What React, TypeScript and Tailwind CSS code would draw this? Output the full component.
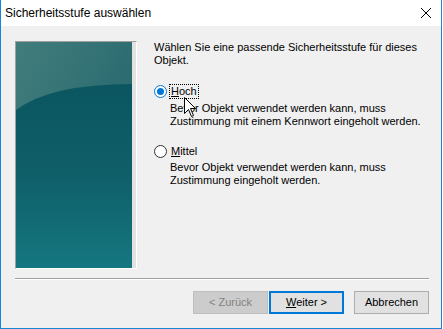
import React from "react";

const font = { fontFamily: '"Liberation Sans", Arial, sans-serif' };

const Radio = ({ checked }: { checked: boolean }) => (
  <span
    className={
      "flex h-[13px] w-[13px] shrink-0 items-center justify-center rounded-full border bg-white " +
      (checked ? "border-[#0078d7]" : "border-[#333333]")
    }
  >
    {checked && <span className="h-[7px] w-[7px] rounded-full bg-[#0078d7]" />}
  </span>
);

const Cursor = () => (
  <svg
    width="13"
    height="20"
    viewBox="0 0 13 20"
    className="pointer-events-none absolute left-[183px] top-[97px]"
  >
    <path
      d="M0.5 0.5 L0.5 16.5 L4.5 12.5 L7.5 19.5 L9.5 18.5 L6.5 11.5 L11.5 11.5 Z"
      fill="#fff"
      stroke="#000"
      strokeWidth="1"
      strokeLinejoin="miter"
    />
  </svg>
);

const Banner = () => (
  <svg viewBox="0 0 117 226" preserveAspectRatio="none" className="h-full w-full">
    <defs>
      <linearGradient id="top" x1="0" y1="0" x2="1" y2="1">
        <stop offset="0" stopColor="#427d7c" />
        <stop offset="0.5" stopColor="#2e6e72" />
        <stop offset="1" stopColor="#1d636b" />
      </linearGradient>
      <linearGradient id="bot" x1="0" y1="0" x2="0" y2="1">
        <stop offset="0" stopColor="#0b5660" />
        <stop offset="0.5" stopColor="#0f5f69" />
        <stop offset="1" stopColor="#157780" />
      </linearGradient>
    </defs>
    <rect width="117" height="226" fill="url(#top)" />
    <path d="M0 68 Q35 42 117 42 L117 226 L0 226 Z" fill="url(#bot)" />
  </svg>
);

const Button = ({
  children,
  disabled,
  primary,
}: {
  children: React.ReactNode;
  disabled?: boolean;
  primary?: boolean;
}) => (
  <div
    className={
      "flex h-[23px] w-[75px] items-center justify-center text-[11px] " +
      (disabled
        ? "border border-[#bfbfbf] bg-[#cccccc] text-[#838383]"
        : primary
        ? "border-2 border-[#0078d7] bg-[#e1e1e1] text-black"
        : "border border-[#adadad] bg-[#e1e1e1] text-black")
    }
  >
    {children}
  </div>
);

export default function App() {
  return (
    <div className="h-[329px] w-[443px] bg-white" style={font}>
      <div className="relative flex h-[329px] w-[442px] flex-col border-x border-b border-[#1883d7]">
        <div className="flex h-[26px] shrink-0 items-center justify-between bg-white pl-[4px] pr-[10px]">
          <span className="text-[12px] text-black">Sicherheitsstufe auswählen</span>
          <svg width="10" height="10" viewBox="0 0 10 10">
            <path d="M0 0 L10 10 M10 0 L0 10" stroke="#000" strokeWidth="1" />
          </svg>
        </div>

        <div className="flex flex-1 flex-col bg-[#f0f0f0] pl-[14px] pr-[12px] pt-[15px] text-[11px] leading-[13px] text-black">
          <div className="flex">
            <div className="flex h-[228px] w-[122px] shrink-0 border border-[#a0a0a0] border-b-white border-r-white">
              <div className="flex-1">
                <Banner />
              </div>
              <div className="w-[4px] bg-[#e2e2e2]" />
            </div>

            <div className="ml-[17px] flex flex-col pt-[0px]">
              <p>Wählen Sie eine passende Sicherheitsstufe für dieses</p>
              <p>Objekt.</p>

              <div className="mt-[17px] flex items-center gap-[2px] -ml-[0px]">
                <Radio checked />
                <span className="border border-dotted border-black px-[1px]">
                  <span className="underline">H</span>och
                </span>
              </div>
              <div className="ml-[16px] mt-[3px]">
                <p>Bevor Objekt verwendet werden kann, muss</p>
                <p>Zustimmung mit einem Kennwort eingeholt werden.</p>
              </div>

              <div className="mt-[17px] flex items-center gap-[4px]">
                <Radio checked={false} />
                <span>
                  <span className="underline">M</span>ittel
                </span>
              </div>
              <div className="ml-[16px] mt-[3px]">
                <p>Bevor Objekt verwendet werden kann, muss</p>
                <p>Zustimmung eingeholt werden.</p>
              </div>
            </div>
          </div>

          <div className="mt-[9px] border-b border-t border-b-white border-t-[#a0a0a0]" />

          <div className="mt-[11px] flex justify-end">
            <Button disabled>&lt; Zurück</Button>
            <div className="ml-[1px]">
              <Button primary>
                <span>
                  <span className="underline">W</span>eiter &gt;
                </span>
              </Button>
            </div>
            <div className="ml-[10px]">
              <Button>Abbrechen</Button>
            </div>
          </div>
        </div>

        <Cursor />
      </div>
    </div>
  );
}
